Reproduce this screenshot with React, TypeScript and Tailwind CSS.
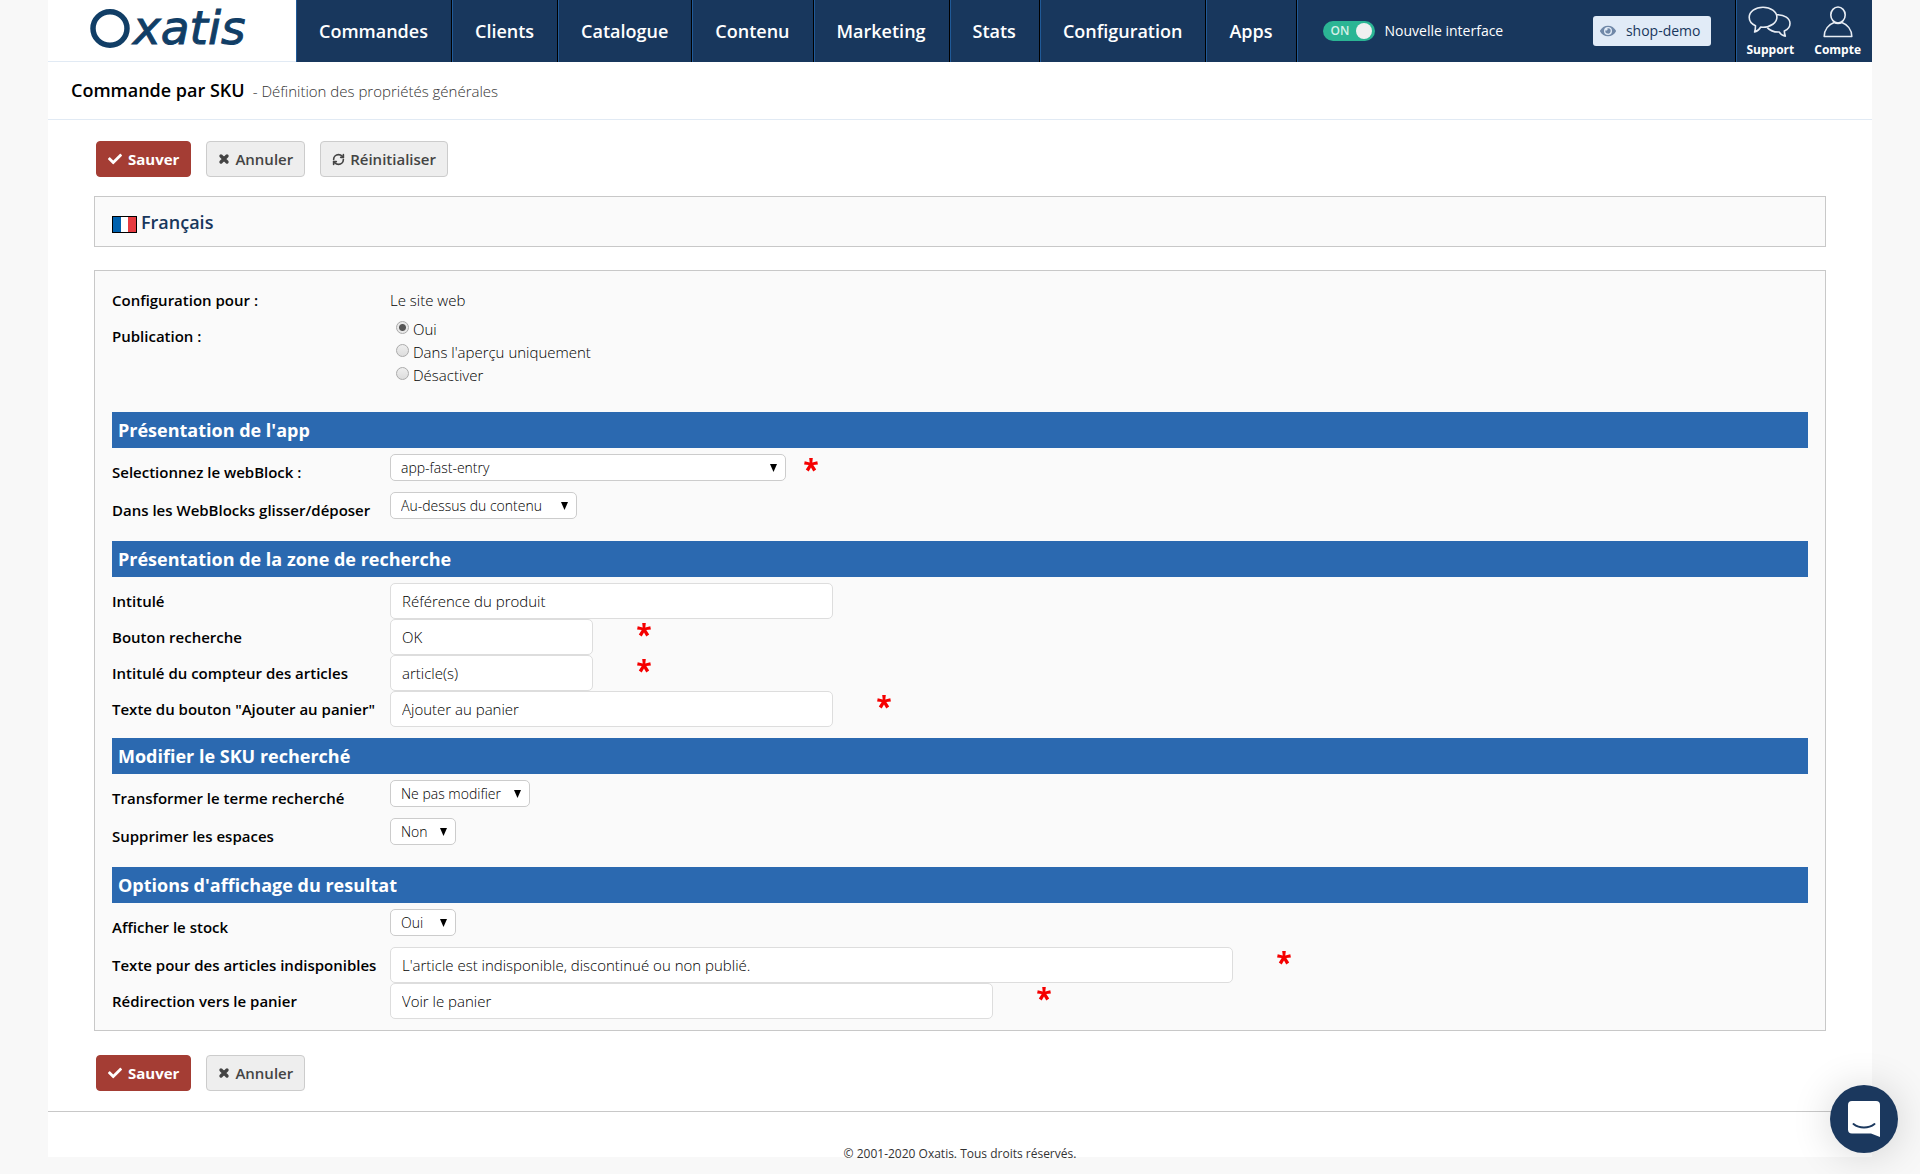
import type { ReactNode } from "react";
import { FaCheck, FaEye } from "react-icons/fa";
import { FaXmark } from "react-icons/fa6";
import { RefreshCw } from "lucide-react";

const NAV_ITEMS = [
  "Commandes",
  "Clients",
  "Catalogue",
  "Contenu",
  "Marketing",
  "Stats",
  "Configuration",
  "Apps",
];

const PUBLICATION_OPTIONS = [
  { value: "oui", label: "Oui" },
  { value: "apercu", label: "Dans l'aperçu uniquement" },
  { value: "desactiver", label: "Désactiver" },
];

const Logo = () => (
  <svg width="180" height="60" viewBox="0 0 180 60" role="img" aria-label="Oxatis">
    <ellipse cx="22" cy="28.500" rx="17" ry="16.800" fill="none" stroke="#113e66" strokeWidth="5.500" />
    <text
      x="45"
      y="44"
      fill="#113e66"
      stroke="#113e66"
      strokeWidth="1"
      fontFamily="DejaVu Sans, sans-serif"
      fontStyle="italic"
      fontSize="47"
    >
      xatis
    </text>
  </svg>
);

const SupportIcon = () => (
  <svg width="44" height="32" viewBox="0 0 44 32" fill="none" stroke="#e8edf4" strokeWidth="1.6" strokeLinejoin="round">
    <path d="M15 1.2C7.300 1.200 1.200 5.600 1.200 11.200c0 3.600 2.500 6.800 6.300 8.600 0 2.400-.3 4.400-.9 6.200 3-1 5-2.800 6-4.900l2.400.1c7.700 0 13.900-4.500 13.900-10S22.700 1.200 15 1.200z" />
    <path d="M29 8.700c7.500 0 13 3.500 13 8.900 0 3.300-2.200 6-5.700 7.500.1 1.800.4 3.400 1 5-3-.5-5-2-6-4.100-4.800.2-9.300-1.300-12-4.400" />
  </svg>
);

const AccountIcon = () => (
  <svg width="30" height="32" viewBox="0 0 30 32" fill="none" stroke="#e8edf4" strokeWidth="1.600" strokeLinejoin="round">
    <ellipse cx="15" cy="9" rx="7.200" ry="8" />
    <path d="M1.200 30.500c0-7 4.500-12 10-14 2.200 1 5.400 1 7.600 0 5.500 2 10 7 10 14z" />
  </svg>
);

const FrenchFlag = () => (
  <svg width="25" height="17" viewBox="0 0 25 17" className="mt-1.5">
    <path fill="#000" d="M0 0h25v17H0z" />
    <path fill="#0061ae" d="M1 1h8v15H1z" />
    <path fill="#fff" d="M9 1h7v15H9z" />
    <path fill="#e63b40" d="M16 1h8v15h-8z" />
  </svg>
);

const RequiredMark = () => (
  <svg width="14" height="14" viewBox="0 0 14 14" className="mt-1 shrink-0" role="img" aria-label="Obligatoire">
    <path
      fill="#f50000"
      d="M5.200 0h3.600l-.5 4.400 5-1.200.6 3.200-4.600.6 2.900 4.500-2.900 1.900L7 9.400l-2.300 4-2.900-1.900 2.900-4.500-4.600-.6.600-3.200 5 1.200z"
    />
  </svg>
);

const ChatIcon = () => (
  <svg width="32" height="36" viewBox="0 0 32 36">
    <path fill="#fff" d="M4 0h24a4 4 0 0 1 4 4v32l-9-3.500H4a4 4 0 0 1-4-4V4a4 4 0 0 1 4-4z" />
    <path d="M5.500 23c6 4.700 15 4.700 21 0" fill="none" stroke="#1b385e" strokeWidth="2" strokeLinecap="round" />
  </svg>
);

const SaveButton = () => (
  <button
    type="submit"
    className="flex h-9 items-center gap-1.5 rounded border border-[#a43d34] bg-[#a43d34] px-[11px] text-[15px] font-bold text-white"
  >
    <FaCheck size={14} />
    Sauver
  </button>
);

const GreyButton = ({ icon, children }: { icon: ReactNode; children: ReactNode }) => (
  <button
    type="button"
    className="flex h-9 items-center gap-[5px] rounded border border-[#ccc] bg-[#eee] px-[11px] text-[15px] font-semibold text-[#444]"
  >
    {icon}
    {children}
  </button>
);

const Section = ({ title, children }: { title: string; children: ReactNode }) => (
  <section className="mb-[11px]">
    <h2 className="mb-1.5 h-9 bg-[#2b69b0] px-1.5 text-lg leading-9 font-bold text-white">{title}</h2>
    {children}
  </section>
);

type FieldProps = { id: string; label: string; value: string; width: string; required?: boolean };

const LABEL_CLASS = "w-[278px] shrink-0 text-[15px] font-semibold text-black";

const SelectRow = ({ id, label, value, width, required }: FieldProps) => (
  <div className="flex h-[38px] items-start">
    <label htmlFor={id} className={`${LABEL_CLASS} leading-9`}>
      {label}
    </label>
    <div className={`relative ${width}`}>
      <select
        id={id}
        className="h-[27px] w-full appearance-none rounded-[5px] border border-[#ccc] bg-white pl-2.5 text-sm leading-5 font-light text-black"
      >
        <option>{value}</option>
      </select>
      <svg width="7" height="8" viewBox="0 0 7 8" className="pointer-events-none absolute top-2.5 right-[9px]">
        <path d="M0 0h7L3.500 8z" />
      </svg>
    </div>
    {required && (
      <div className="ml-[18px]">
        <RequiredMark />
      </div>
    )}
  </div>
);

const InputRow = ({ id, label, value, width, required }: FieldProps) => (
  <div className="flex h-9 items-start">
    <label htmlFor={id} className={`${LABEL_CLASS} leading-9`}>
      {label}
    </label>
    <input
      id={id}
      type="text"
      defaultValue={value}
      className={`h-9 rounded-[5px] border border-[#ddd] bg-white px-[11px] text-[15px] font-light text-black ${width}`}
    />
    {required && (
      <div className="ml-11">
        <RequiredMark />
      </div>
    )}
  </div>
);

const Header = () => (
  <header className="flex h-[62px]">
    <a href="#" className="w-[248px] shrink-0 border-b border-[#e1eaf4] pl-10">
      <Logo />
    </a>
    <div className="flex grow bg-[#18375d] text-white">
      <nav className="flex">
        {NAV_ITEMS.map((item) => (
          <a
            key={item}
            href="#"
            className="flex items-center border-r border-l border-r-black border-l-[#205a98] pr-[23px] pl-[22px] text-lg font-semibold"
          >
            {item}
          </a>
        ))}
      </nav>
      <div className="flex grow items-center border-r border-l border-r-black border-l-[#205a98] pr-6 pl-[25px]">
        <button
          type="button"
          role="switch"
          aria-checked="true"
          aria-labelledby="new-ui"
          className="flex h-5 w-[52px] items-center justify-between rounded-full bg-[#2bb594] pr-[3px] pl-2 text-xs font-semibold text-[#d5f0e9]"
        >
          ON
          <span className="h-4 w-4 rounded-full bg-[#f0f0f0]" />
        </button>
        <span id="new-ui" className="ml-2.5 text-sm">
          Nouvelle interface
        </span>
        <a
          href="#"
          className="ml-auto flex h-[30px] items-center gap-2.5 rounded-[3px] bg-[#e1ebf7] pr-[11px] pl-[7px] text-sm text-[#18375d]"
        >
          <FaEye size={16} className="text-[#7088a8]" />
          shop-demo
        </a>
      </div>
      <div className="flex gap-5 border-l border-[#205a98] pr-[11px] pl-[9px] text-xs leading-4 font-bold">
        <a href="#" className="flex flex-col items-center gap-1 pt-1.5">
          <SupportIcon />
          Support
        </a>
        <a href="#" className="flex flex-col items-center gap-1 pt-1.5">
          <AccountIcon />
          Compte
        </a>
      </div>
    </div>
  </header>
);

const App = () => {
  return (
    <div className="min-h-screen bg-[#f8f8f8] px-12 font-['Open_Sans',sans-serif]">
      <div className="bg-white">
        <Header />

        <div className="flex h-[58px] items-baseline gap-2 border-b border-[#e1eaf4] px-[23px] pt-3.5">
          <h1 className="text-lg font-semibold text-black">Commande par SKU</h1>
          <p className="text-[15px] font-light text-[#333]">- Définition des propriétés générales</p>
        </div>

        <form className="px-[46px]">
          <div className="flex gap-[15px] px-0.5 pt-[21px] pb-[19px]">
            <SaveButton />
            <GreyButton icon={<FaXmark size={12} strokeWidth={80} stroke="currentColor" />}>Annuler</GreyButton>
            <GreyButton icon={<RefreshCw size={13} strokeWidth={3} />}>Réinitialiser</GreyButton>
          </div>

          <div className="mb-[23px] flex h-[51px] items-center gap-1 border border-[#c8c8c8] bg-[#fafafa] px-[17px] text-lg font-semibold text-[#18375d]">
            <FrenchFlag />
            Français
          </div>

          <div className="border border-[#c8c8c8] bg-[#fafafa] px-[17px] pt-[11px]">
            <div className="flex h-9 text-[15px] leading-9">
              <span className={`${LABEL_CLASS} leading-9`}>Configuration pour :</span>
              <span className="font-light text-black">Le site web</span>
            </div>
            <fieldset className="mb-[11px] flex h-[83px]" aria-labelledby="publication">
              <span id="publication" className={`${LABEL_CLASS} leading-9`}>
                Publication :
              </span>
              <div className="pl-1.5">
                {PUBLICATION_OPTIONS.map((option, index) => (
                  <label key={option.value} className="flex h-[23px] items-center gap-1 text-[15px] font-light text-black">
                    <input
                      type="radio"
                      name="publication"
                      value={option.value}
                      defaultChecked={index === 0}
                      className="mb-1 h-[13px] w-[13px] appearance-none rounded-full border border-[#aaa] bg-linear-to-b from-[#eee] to-[#ddd] checked:bg-[radial-gradient(circle,#555_0_3px,#e8e8e8_4px)]"
                    />
                    {option.label}
                  </label>
                ))}
              </div>
            </fieldset>

            <Section title="Présentation de l'app">
              <SelectRow id="webblock" label="Selectionnez le webBlock :" value="app-fast-entry" width="w-[396px]" required />
              <SelectRow id="position" label="Dans les WebBlocks glisser/déposer" value="Au-dessus du contenu" width="w-[187px]" />
            </Section>

            <Section title="Présentation de la zone de recherche">
              <InputRow id="title" label="Intitulé" value="Référence du produit" width="w-[443px]" />
              <InputRow id="search" label="Bouton recherche" value="OK" width="w-[203px]" required />
              <InputRow id="counter" label="Intitulé du compteur des articles" value="article(s)" width="w-[203px]" required />
              <InputRow id="add" label={'Texte du bouton "Ajouter au panier"'} value="Ajouter au panier" width="w-[443px]" required />
            </Section>

            <Section title="Modifier le SKU recherché">
              <SelectRow id="transform" label="Transformer le terme recherché" value="Ne pas modifier" width="w-[140px]" />
              <SelectRow id="spaces" label="Supprimer les espaces" value="Non" width="w-[66px]" />
            </Section>

            <Section title="Options d'affichage du resultat">
              <SelectRow id="stock" label="Afficher le stock" value="Oui" width="w-[66px]" />
              <InputRow
                id="unavailable"
                label="Texte pour des articles indisponibles"
                value="L'article est indisponible, discontinué ou non publié."
                width="w-[843px]"
                required
              />
              <InputRow id="redirect" label="Rédirection vers le panier" value="Voir le panier" width="w-[603px]" required />
            </Section>
          </div>

          <div className="flex gap-[15px] px-0.5 pt-6 pb-5">
            <SaveButton />
            <GreyButton icon={<FaXmark size={12} strokeWidth={80} stroke="currentColor" />}>Annuler</GreyButton>
          </div>
        </form>

        <footer className="border-t border-[#c8c8c8] pt-[39px] text-center text-xs leading-[6px] text-[#333]">
          © 2001-2020 Oxatis. Tous droits réservés.
        </footer>
      </div>

      {/* Chat launcher */}
      <button
        type="button"
        aria-label="Ouvrir le chat"
        className="fixed right-[22px] bottom-[21px] flex h-[68px] w-[68px] items-center justify-center rounded-full bg-[#1b385e] shadow-[0_2px_40px_rgba(0,0,0,0.16)]"
      >
        <ChatIcon />
      </button>
    </div>
  );
};

export default App;
